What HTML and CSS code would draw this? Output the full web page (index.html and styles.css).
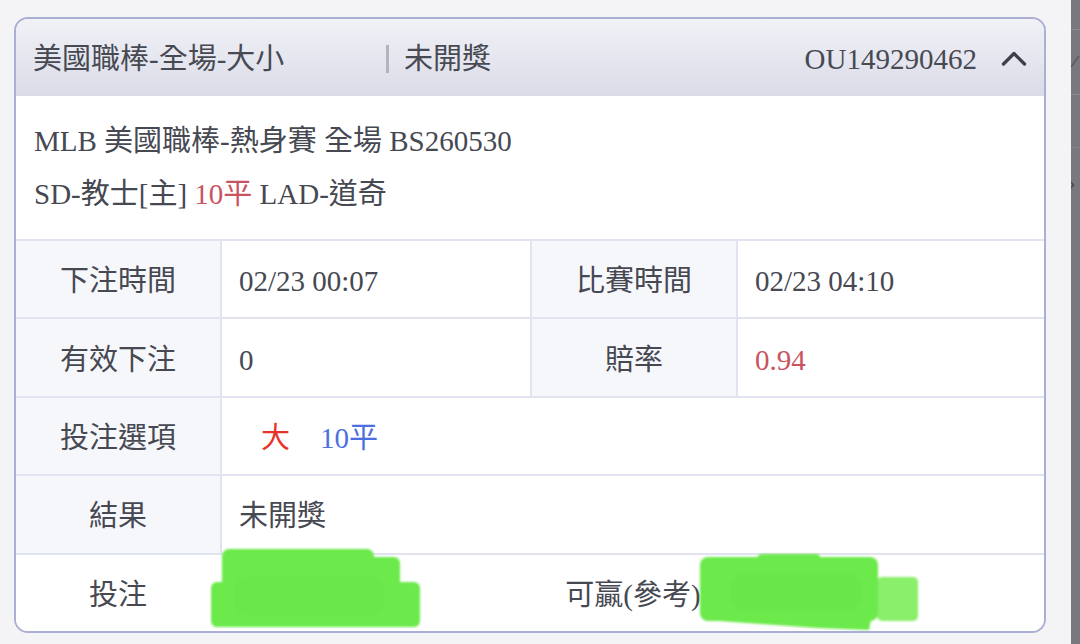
FILE: index.html
```html
<!DOCTYPE html>
<html lang="zh-Hant">
<head>
<meta charset="utf-8">
<title>注單詳情</title>
<link rel="stylesheet" href="styles.css">
</head>
<body>
<div class="page">
  <main class="main">
    <section class="card">
      <header class="card-head">
        <div class="h-title">美國職棒-全場-大小</div>
        <div class="h-status"><span class="h-sep"></span>未開獎</div>
        <div class="h-id">OU149290462</div>
        <svg class="h-chev" width="26" height="16" viewBox="0 0 26 16" aria-hidden="true">
          <path d="M2.5 14 L13 3.5 L23.5 14" fill="none" stroke="#3e404b" stroke-width="3.3" stroke-linecap="round" stroke-linejoin="round"/>
        </svg>
      </header>

      <div class="info">
        <div class="info-line">MLB 美國職棒-熱身賽 全場 BS260530</div>
        <div class="info-line">SD-教士[主] <span class="soft-red">10平</span> LAD-道奇</div>
      </div>

      <div class="table">
        <div class="row">
          <div class="cell label">下注時間</div>
          <div class="cell value">02/23 00:07</div>
          <div class="cell label">比賽時間</div>
          <div class="cell value">02/23 04:10</div>
        </div>
        <div class="row">
          <div class="cell label">有效下注</div>
          <div class="cell value">0</div>
          <div class="cell label">賠率</div>
          <div class="cell value soft-red">0.94</div>
        </div>
        <div class="row">
          <div class="cell label">投注選項</div>
          <div class="cell value wide"><span class="pick-big">大</span><span class="pick-line">10平</span></div>
        </div>
        <div class="row">
          <div class="cell label">結果</div>
          <div class="cell value wide">未開獎</div>
        </div>
        <div class="row last">
          <div class="cell label">投注</div>
          <div class="cell value"></div>
          <div class="cell label">可贏(參考)</div>
          <div class="cell value"></div>
          <svg class="blot blot-a" width="212" height="82" viewBox="0 0 212 82" aria-hidden="true">
            <defs><filter id="bla" x="-5%" y="-5%" width="110%" height="110%"><feGaussianBlur stdDeviation="1.2"/></filter></defs>
            <g filter="url(#bla)">
              <rect x="12" y="2" width="152" height="76" rx="7" fill="#6ce94b"/>
              <rect x="150" y="10" width="40" height="52" rx="6" fill="#6ce94b"/>
              <rect x="1" y="35" width="209" height="45" rx="6" fill="#6ce94b"/>
              <rect x="24" y="30" width="150" height="38" rx="14" fill="#66e446" opacity="0.35"/>
            </g>
          </svg>
          <svg class="blot blot-b" width="224" height="80" viewBox="0 0 224 80" aria-hidden="true">
            <defs><filter id="blb" x="-5%" y="-5%" width="110%" height="110%"><feGaussianBlur stdDeviation="1.2"/></filter></defs>
            <g filter="url(#blb)">
              <rect x="180" y="25" width="41" height="44" rx="5" fill="#8aef6a"/>
              <rect x="3" y="5" width="178" height="64" rx="8" fill="#6ce94b"/>
              <rect x="60" y="2" width="64" height="12" rx="5" fill="#6ce94b"/>
              <path d="M16 58 L176 58 L172 78 L120 76 L22 69 Z" fill="#6ce94b"/>
              <rect x="34" y="22" width="130" height="36" rx="14" fill="#64e244" opacity="0.35"/>
            </g>
          </svg>
        </div>
      </div>
    </section>
  </main>
  <aside class="strip">
    <svg width="9" height="644" viewBox="0 0 9 644" aria-hidden="true">
      <rect x="0" y="29" width="9" height="1" fill="#8a8a8f"/>
      <rect x="0" y="94" width="9" height="1" fill="#8a8a8f"/>
      <rect x="0" y="147" width="9" height="1" fill="#858589"/>
      <path d="M0 67 L8 56" stroke="#5a5a5f" stroke-width="1.5" fill="none"/>
      <path d="M0 182 L2.5 185 L0 188" stroke="#4a4a4f" stroke-width="1.5" fill="none"/>
    </svg>
  </aside>
</div>
</body>
</html>
```

FILE: styles.css
```css
* {
  box-sizing: border-box;
}

html, body {
  margin: 0;
  padding: 0;
  overflow: hidden;
}

body {
  font-family: "Liberation Serif", "Noto Sans CJK TC", serif;
  color: #464852;
  background: #f4f4f6;
}

.page {
  display: flex;
  width: 1080px;
  height: 644px;
  overflow: hidden;
  background: #f4f4f6;
}

.main {
  flex: 0 0 1071px;
  width: 1071px;
  padding: 17px 25px 0 14px;
}

.strip {
  flex: 0 0 9px;
  width: 9px;
  height: 644px;
  background: #79797d;
}

.strip svg {
  display: block;
}

.card {
  border: 2px solid #abafd4;
  border-radius: 14px;
  overflow: hidden;
  background: #ffffff;
}

.card-head {
  height: 77px;
  display: flex;
  align-items: center;
  padding: 2px 17px 0;
  background: linear-gradient(#f1f2f7, #dadbe7);
  font-size: 29px;
  line-height: 36px;
  color: #474953;
}

.h-title {
  width: 353px;
}

.h-status {
  display: flex;
  align-items: center;
}

.h-sep {
  width: 3px;
  height: 28px;
  background: #b3b4bd;
  margin-right: 15px;
}

.h-id {
  margin-left: auto;
}

.h-chev {
  display: block;
  margin-left: 24px;
  margin-top: -2px;
}

.info {
  height: 143px;
  padding: 0 18px;
  display: flex;
  flex-direction: column;
  justify-content: center;
  font-size: 29px;
  line-height: 53px;
}

.soft-red {
  color: #c9535f;
}

.table {
  display: flex;
  flex-direction: column;
}

.row {
  display: grid;
  grid-template-columns: 204px 310px 206px 1fr;
  height: 78.4px;
  border-top: 2px solid #e1e3f1;
  font-size: 29px;
  line-height: 36px;
}

.cell {
  display: flex;
  align-items: center;
  padding-top: 4px;
}

.cell + .cell {
  border-left: 2px solid #e1e3f1;
}

.label {
  justify-content: center;
  background: #f6f7fb;
}

.value {
  padding-left: 17px;
  background: #ffffff;
}

.wide {
  grid-column: 2 / 5;
}

.pick-big {
  color: #e6332b;
  margin-left: 22px;
}

.pick-line {
  color: #4b6fe0;
  margin-left: 30px;
}

.row.last {
  position: relative;
}

.row.last .cell {
  border-left: none;
  background: #ffffff;
}

.blot {
  position: absolute;
  display: block;
}

.blot-a {
  left: 194px;
  top: -8px;
}

.blot-b {
  left: 681px;
  top: -3px;
}
```
